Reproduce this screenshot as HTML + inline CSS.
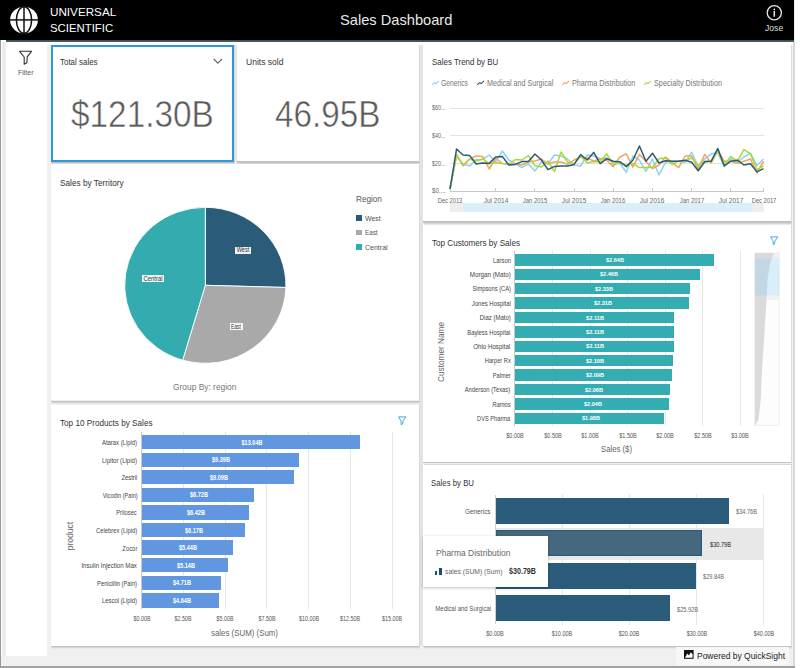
<!DOCTYPE html>
<html><head><meta charset="utf-8"><title>Sales Dashboard</title>
<style>
html,body{margin:0;padding:0;width:800px;height:668px;overflow:hidden;background:#fff;}
body{position:relative;font-family:"Liberation Sans",sans-serif;}
.a{position:absolute;box-sizing:content-box;}
.t{position:absolute;white-space:nowrap;}
</style></head><body>
<div class="a" style="left:0px;top:0px;width:795.00px;height:668.00px;background:#f0f0f0;"></div>
<div class="a" style="left:0px;top:0px;width:1.00px;height:668.00px;background:#9a9a9a;"></div>
<div class="a" style="left:792.5px;top:42px;width:2.50px;height:626.00px;background:#d9d9d9;"></div>
<div class="a" style="left:1px;top:655.5px;width:792.00px;height:10.50px;background:#f0f0f0;"></div>
<div class="a" style="left:0px;top:666.4px;width:795.00px;height:1.60px;background:#a2a2a2;"></div>
<div class="a" style="left:1px;top:42px;width:792.00px;height:2.50px;background:#ffffff;"></div>
<div class="a" style="left:1px;top:40px;width:5.00px;height:615.50px;background:#ffffff;"></div>
<div class="a" style="left:2px;top:42px;width:4.30px;height:613.50px;background:#ededed;"></div>
<div class="a" style="left:6.3px;top:42px;width:40.90px;height:613.50px;background:#ffffff;"></div>
<div class="a" style="left:0px;top:0px;width:794.00px;height:40.00px;background:#000000;"></div>
<div class="a" style="left:6px;top:40px;width:788.00px;height:1.00px;background:#4d4a4a;"></div>
<div class="a" style="left:6px;top:41px;width:788.00px;height:1.00px;background:#3a6170;"></div>
<div class="a" style="left:419px;top:44.5px;width:3.60px;height:601.50px;background:#e3e3e3;"></div>
<div class="a" style="left:234px;top:44.5px;width:2.50px;height:117.50px;background:#e3e3e3;"></div>
<div class="a" style="left:50.8px;top:162px;width:184.20px;height:1.40px;background:#c2c2c2;"></div>
<div class="a" style="left:51.8px;top:163.4px;width:183.20px;height:1.00px;background:#d6d6d6;"></div>
<div class="a" style="left:51.8px;top:164.4px;width:183.20px;height:1.00px;background:#e8e8e8;"></div>
<div class="a" style="left:234px;top:45.1px;width:1.20px;height:117.90px;background:#dadada;"></div>
<div class="a" style="left:50.8px;top:45.1px;width:183.20px;height:116.90px;background:#ffffff;"></div>
<div class="a" style="left:50.8px;top:45.1px;width:179.20px;height:112.90px;border:2px solid #2d9ad8;"></div>
<div class="a" style="left:236.5px;top:161.2px;width:183.60px;height:1.40px;background:#c2c2c2;"></div>
<div class="a" style="left:237.5px;top:162.6px;width:182.60px;height:1.00px;background:#d6d6d6;"></div>
<div class="a" style="left:237.5px;top:163.6px;width:182.60px;height:1.00px;background:#e8e8e8;"></div>
<div class="a" style="left:419.1px;top:44.5px;width:1.20px;height:117.70px;background:#dadada;"></div>
<div class="a" style="left:236.5px;top:44.5px;width:182.60px;height:116.70px;background:#ffffff;"></div>
<div class="a" style="left:50.8px;top:400.5px;width:369.30px;height:1.40px;background:#c2c2c2;"></div>
<div class="a" style="left:51.8px;top:401.9px;width:368.30px;height:1.00px;background:#d6d6d6;"></div>
<div class="a" style="left:51.8px;top:402.9px;width:368.30px;height:1.00px;background:#e8e8e8;"></div>
<div class="a" style="left:419.1px;top:163.8px;width:1.20px;height:237.70px;background:#dadada;"></div>
<div class="a" style="left:50.8px;top:163.8px;width:368.30px;height:236.70px;background:#ffffff;"></div>
<div class="a" style="left:50.8px;top:646px;width:369.30px;height:1.40px;background:#c2c2c2;"></div>
<div class="a" style="left:51.8px;top:647.4px;width:368.30px;height:1.00px;background:#d6d6d6;"></div>
<div class="a" style="left:51.8px;top:648.4px;width:368.30px;height:1.00px;background:#e8e8e8;"></div>
<div class="a" style="left:419.1px;top:404.5px;width:1.20px;height:242.50px;background:#dadada;"></div>
<div class="a" style="left:50.8px;top:404.5px;width:368.30px;height:241.50px;background:#ffffff;"></div>
<div class="a" style="left:422.6px;top:221.3px;width:369.40px;height:1.40px;background:#c2c2c2;"></div>
<div class="a" style="left:423.6px;top:222.70000000000002px;width:368.40px;height:1.00px;background:#d6d6d6;"></div>
<div class="a" style="left:423.6px;top:223.70000000000002px;width:368.40px;height:1.00px;background:#e8e8e8;"></div>
<div class="a" style="left:791px;top:44.5px;width:1.20px;height:177.80px;background:#dadada;"></div>
<div class="a" style="left:422.6px;top:44.5px;width:368.40px;height:176.80px;background:#ffffff;"></div>
<div class="a" style="left:422.6px;top:462.1px;width:369.40px;height:1.40px;background:#c2c2c2;"></div>
<div class="a" style="left:423.6px;top:463.5px;width:368.40px;height:1.00px;background:#d6d6d6;"></div>
<div class="a" style="left:423.6px;top:464.5px;width:368.40px;height:1.00px;background:#e8e8e8;"></div>
<div class="a" style="left:791px;top:224.5px;width:1.20px;height:238.60px;background:#dadada;"></div>
<div class="a" style="left:422.6px;top:224.5px;width:368.40px;height:237.60px;background:#ffffff;"></div>
<div class="a" style="left:422.6px;top:646px;width:369.40px;height:1.40px;background:#c2c2c2;"></div>
<div class="a" style="left:423.6px;top:647.4px;width:368.40px;height:1.00px;background:#d6d6d6;"></div>
<div class="a" style="left:423.6px;top:648.4px;width:368.40px;height:1.00px;background:#e8e8e8;"></div>
<div class="a" style="left:791px;top:465px;width:1.20px;height:182.00px;background:#dadada;"></div>
<div class="a" style="left:422.6px;top:465px;width:368.40px;height:181.00px;background:#ffffff;"></div>
<svg class="a" style="left:9px;top:6px" width="31" height="29" viewBox="0 0 31 29">
<ellipse cx="15" cy="14" rx="13.9" ry="13.3" fill="#fff"/>
<line x1="15" y1="0.5" x2="15" y2="27.5" stroke="#111" stroke-width="1.5"/>
<line x1="1" y1="13.9" x2="29" y2="13.9" stroke="#111" stroke-width="1.5"/>
<ellipse cx="15" cy="14" rx="7.6" ry="13.3" fill="none" stroke="#111" stroke-width="1.5"/>
</svg>
<svg class="a" style="left:765px;top:4px" width="19" height="18" viewBox="0 0 19 18">
<circle cx="9.3" cy="8.7" r="7.1" fill="none" stroke="#e6e6e6" stroke-width="1.3"/>
<circle cx="9.3" cy="5.3" r="0.85" fill="#e6e6e6"/>
<rect x="8.55" y="6.9" width="1.5" height="5.8" fill="#e6e6e6"/>
</svg>
<svg class="a" style="left:18px;top:50px" width="16" height="16" viewBox="0 0 16 16">
<path d="M1.5 1.3 H13.5 L9.2 6.8 L8.9 12.8 L6.2 14.2 L6.2 7 Z" fill="none" stroke="#333" stroke-width="1.1" stroke-linejoin="round"/>
</svg>
<svg class="a" style="left:213px;top:57.7px" width="10" height="7" viewBox="0 0 10 7">
<path d="M0.8 1 L4.9 5.2 L9 1" fill="none" stroke="#666" stroke-width="1.1"/>
</svg>
<svg class="a" style="left:431.6px;top:80px" width="8" height="6" viewBox="0 0 8 6"><path d="M0.2 4.9 L2.6 2.7 L4.2 3.6 L7 0.9" fill="none" stroke="#8fd2ef" stroke-width="1.1"/></svg>
<svg class="a" style="left:477.1px;top:80px" width="8" height="6" viewBox="0 0 8 6"><path d="M0.2 4.9 L2.6 2.7 L4.2 3.6 L7 0.9" fill="none" stroke="#2b5a78" stroke-width="1.1"/></svg>
<svg class="a" style="left:562.1px;top:80px" width="8" height="6" viewBox="0 0 8 6"><path d="M0.2 4.9 L2.6 2.7 L4.2 3.6 L7 0.9" fill="none" stroke="#f4a35e" stroke-width="1.1"/></svg>
<svg class="a" style="left:644.1px;top:80px" width="8" height="6" viewBox="0 0 8 6"><path d="M0.2 4.9 L2.6 2.7 L4.2 3.6 L7 0.9" fill="none" stroke="#a9d83a" stroke-width="1.1"/></svg>
<div class="a" style="left:450px;top:107.5px;width:314.00px;height:1.00px;background:#e2e2e2;"></div>
<div class="a" style="left:450px;top:135.1px;width:314.00px;height:1.00px;background:#e2e2e2;"></div>
<div class="a" style="left:450px;top:162.7px;width:314.00px;height:1.00px;background:#e2e2e2;"></div>
<div class="a" style="left:450px;top:190.5px;width:314.00px;height:1.00px;background:#c8c8c8;"></div>
<div class="a" style="left:449.5px;top:187.5px;width:1.00px;height:3.50px;background:#c8c8c8;"></div>
<div class="a" style="left:495.21875px;top:187.5px;width:1.00px;height:3.50px;background:#c8c8c8;"></div>
<div class="a" style="left:534.40625px;top:187.5px;width:1.00px;height:3.50px;background:#c8c8c8;"></div>
<div class="a" style="left:573.59375px;top:187.5px;width:1.00px;height:3.50px;background:#c8c8c8;"></div>
<div class="a" style="left:612.78125px;top:187.5px;width:1.00px;height:3.50px;background:#c8c8c8;"></div>
<div class="a" style="left:651.96875px;top:187.5px;width:1.00px;height:3.50px;background:#c8c8c8;"></div>
<div class="a" style="left:691.15625px;top:187.5px;width:1.00px;height:3.50px;background:#c8c8c8;"></div>
<div class="a" style="left:730.34375px;top:187.5px;width:1.00px;height:3.50px;background:#c8c8c8;"></div>
<div class="a" style="left:763.0px;top:187.5px;width:1.00px;height:3.50px;background:#c8c8c8;"></div>
<div class="a" style="left:450px;top:203.2px;width:302.00px;height:8.60px;background:#dbeffb;"></div>
<div class="a" style="left:752px;top:203.2px;width:12.00px;height:8.60px;background:#eeeeee;"></div>
<div class="a" style="left:450px;top:203.2px;width:12.50px;height:8.60px;background:#eeeeee;"></div>
<svg class="a" style="left:0;top:0" width="800" height="668"><polyline points="450.00,189.00 456.53,156.00 463.06,164.00 469.59,166.00 476.12,159.60 482.66,159.40 489.19,155.00 495.72,161.60 502.25,151.00 508.78,160.00 515.31,163.60 521.84,167.60 528.38,164.00 534.91,171.00 541.44,162.00 547.97,164.00 554.50,155.00 561.03,156.00 567.56,159.00 574.09,165.00 580.62,166.00 587.16,155.00 593.69,156.00 600.22,158.40 606.75,158.00 613.28,162.30 619.81,163.40 626.34,172.30 632.88,156.00 639.41,160.20 645.94,171.40 652.47,159.00 659.00,175.00 665.53,162.30 672.06,161.20 678.59,161.20 685.12,162.30 691.66,152.30 698.19,166.60 704.72,159.00 711.25,153.80 717.78,152.70 724.31,166.60 730.84,159.00 737.38,162.30 743.91,157.00 750.44,153.20 756.97,165.50 763.50,159.00" fill="none" stroke="#8fd2ef" stroke-width="1.5" stroke-linejoin="round"/><polyline points="450.00,189.00 456.53,154.00 463.06,166.00 469.59,159.00 476.12,156.00 482.66,156.40 489.19,169.00 495.72,158.00 502.25,163.60 508.78,164.00 515.31,164.00 521.84,165.00 528.38,162.00 534.91,161.00 541.44,159.00 547.97,164.00 554.50,162.00 561.03,162.00 567.56,164.40 574.09,160.00 580.62,157.00 587.16,158.00 593.69,161.00 600.22,159.00 606.75,160.20 613.28,166.60 619.81,157.00 626.34,153.80 632.88,167.20 639.41,154.40 645.94,161.20 652.47,168.70 659.00,165.00 665.53,157.00 672.06,162.30 678.59,167.60 685.12,156.00 691.66,156.00 698.19,169.30 704.72,154.40 711.25,163.00 717.78,150.60 724.31,161.20 730.84,161.20 737.38,163.40 743.91,161.20 750.44,159.00 756.97,173.00 763.50,161.20" fill="none" stroke="#f4a35e" stroke-width="1.5" stroke-linejoin="round"/><polyline points="450.00,189.00 456.53,155.00 463.06,165.00 469.59,159.00 476.12,161.00 482.66,159.00 489.19,163.60 495.72,162.40 502.25,163.60 508.78,164.00 515.31,159.60 521.84,160.00 528.38,155.60 534.91,165.60 541.44,167.00 547.97,161.00 554.50,171.60 561.03,152.00 567.56,162.00 574.09,164.00 580.62,156.00 587.16,163.00 593.69,161.60 600.22,162.00 606.75,153.80 613.28,164.40 619.81,163.00 626.34,165.00 632.88,163.40 639.41,167.60 645.94,167.60 652.47,167.20 659.00,158.70 665.53,158.00 672.06,164.40 678.59,160.80 685.12,160.80 691.66,158.00 698.19,165.50 704.72,161.20 711.25,160.80 717.78,150.60 724.31,164.40 730.84,156.60 737.38,161.20 743.91,149.60 750.44,153.80 756.97,169.70 763.50,166.00" fill="none" stroke="#a9d83a" stroke-width="1.5" stroke-linejoin="round"/><polyline points="450.00,189.00 456.53,149.00 463.06,155.00 469.59,155.40 476.12,164.00 482.66,163.00 489.19,163.40 495.72,157.00 502.25,156.40 508.78,165.00 515.31,164.40 521.84,161.60 528.38,161.40 534.91,154.00 541.44,160.00 547.97,169.60 554.50,166.40 561.03,166.00 567.56,166.00 574.09,164.40 580.62,154.60 587.16,160.00 593.69,152.40 600.22,163.60 606.75,158.70 613.28,161.20 619.81,161.70 626.34,166.60 632.88,160.20 639.41,146.00 645.94,161.20 652.47,153.20 659.00,163.00 665.53,160.80 672.06,161.20 678.59,161.20 685.12,160.20 691.66,162.30 698.19,170.80 704.72,161.70 711.25,161.20 717.78,148.50 724.31,166.00 730.84,161.20 737.38,160.20 743.91,165.00 750.44,163.80 756.97,171.90 763.50,168.70" fill="none" stroke="#2b5a78" stroke-width="1.5" stroke-linejoin="round"/></svg>
<svg class="a" style="left:0;top:0" width="800" height="668"><g transform="translate(0,285.3) scale(1,0.96774) translate(0,-285.3)"><path d="M205.3,285.3 L205.30,204.70 A80.6,80.6 0 0 1 285.87,287.55 Z" fill="#2a5b78" stroke="#fff" stroke-width="0.9" vector-effect="non-scaling-stroke"/><path d="M205.3,285.3 L285.87,287.55 A80.6,80.6 0 0 1 182.68,362.66 Z" fill="#a9a9a9" stroke="#fff" stroke-width="0.9" vector-effect="non-scaling-stroke"/><path d="M205.3,285.3 L182.68,362.66 A80.6,80.6 0 0 1 205.30,204.70 Z" fill="#34abae" stroke="#fff" stroke-width="0.9" vector-effect="non-scaling-stroke"/></g></svg>
<div class="a" style="left:235px;top:246.5px;width:15.70px;height:7.50px;background:rgba(255,255,255,0.92);"></div>
<div class="a" style="left:229.8px;top:322.8px;width:12.80px;height:7.50px;background:rgba(255,255,255,0.92);"></div>
<div class="a" style="left:142px;top:275px;width:21.90px;height:7.40px;background:rgba(255,255,255,0.92);"></div>
<div class="a" style="left:355.9px;top:215.0px;width:6.00px;height:5.80px;background:#2a5b78;"></div>
<div class="a" style="left:355.9px;top:229.5px;width:6.00px;height:5.80px;background:#a9a9a9;"></div>
<div class="a" style="left:355.9px;top:244.0px;width:6.00px;height:5.80px;background:#34abae;"></div>
<svg class="a" style="left:398px;top:416.3px" width="9" height="10" viewBox="0 0 9 10">
<path d="M0.5 0.9 H7.8 L5.0 4.8 L4.7 7.8 L3.2 8.8 L3.0 4.8 Z" fill="none" stroke="#3ea3dc" stroke-width="0.95" stroke-linejoin="round"/>
</svg>
<div class="a" style="left:182.85px;top:432px;width:1.00px;height:177.00px;background:#e6e6e6;"></div>
<div class="a" style="left:224.6px;top:432px;width:1.00px;height:177.00px;background:#e6e6e6;"></div>
<div class="a" style="left:266.35px;top:432px;width:1.00px;height:177.00px;background:#e6e6e6;"></div>
<div class="a" style="left:308.1px;top:432px;width:1.00px;height:177.00px;background:#e6e6e6;"></div>
<div class="a" style="left:349.85px;top:432px;width:1.00px;height:177.00px;background:#e6e6e6;"></div>
<div class="a" style="left:391.6px;top:432px;width:1.00px;height:177.00px;background:#e6e6e6;"></div>
<div class="a" style="left:141.0px;top:432px;width:1.00px;height:177.00px;background:#c9c9c9;"></div>
<div class="a" style="left:142.0px;top:435.0px;width:217.77px;height:14.30px;background:#6197e0;"></div>
<div class="a" style="left:142.0px;top:452.58px;width:156.81px;height:14.30px;background:#6197e0;"></div>
<div class="a" style="left:142.0px;top:470.15999999999997px;width:151.80px;height:14.30px;background:#6197e0;"></div>
<div class="a" style="left:142.0px;top:487.74px;width:112.22px;height:14.30px;background:#6197e0;"></div>
<div class="a" style="left:142.0px;top:505.32px;width:107.21px;height:14.30px;background:#6197e0;"></div>
<div class="a" style="left:142.0px;top:522.9px;width:103.04px;height:14.30px;background:#6197e0;"></div>
<div class="a" style="left:142.0px;top:540.48px;width:90.85px;height:14.30px;background:#6197e0;"></div>
<div class="a" style="left:142.0px;top:558.06px;width:85.84px;height:14.30px;background:#6197e0;"></div>
<div class="a" style="left:142.0px;top:575.64px;width:78.66px;height:14.30px;background:#6197e0;"></div>
<div class="a" style="left:142.0px;top:593.22px;width:77.49px;height:14.30px;background:#6197e0;"></div>
<svg class="a" style="left:769.8px;top:235.8px" width="9" height="10" viewBox="0 0 9 10">
<path d="M0.5 0.9 H7.8 L5.0 4.8 L4.7 7.8 L3.2 8.8 L3.0 4.8 Z" fill="none" stroke="#3ea3dc" stroke-width="0.95" stroke-linejoin="round"/>
</svg>
<div class="a" style="left:552.08px;top:251px;width:1.00px;height:175.00px;background:#e6e6e6;"></div>
<div class="a" style="left:589.66px;top:251px;width:1.00px;height:175.00px;background:#e6e6e6;"></div>
<div class="a" style="left:627.24px;top:251px;width:1.00px;height:175.00px;background:#e6e6e6;"></div>
<div class="a" style="left:664.8199999999999px;top:251px;width:1.00px;height:175.00px;background:#e6e6e6;"></div>
<div class="a" style="left:702.4px;top:251px;width:1.00px;height:175.00px;background:#e6e6e6;"></div>
<div class="a" style="left:739.98px;top:251px;width:1.00px;height:175.00px;background:#e6e6e6;"></div>
<div class="a" style="left:514.4px;top:251px;width:1.00px;height:175.00px;background:#c9c9c9;"></div>
<div class="a" style="left:515.4px;top:254.3px;width:198.40px;height:11.40px;background:#34adb2;"></div>
<div class="a" style="left:515.4px;top:268.69px;width:184.87px;height:11.40px;background:#34adb2;"></div>
<div class="a" style="left:515.4px;top:283.08000000000004px;width:175.10px;height:11.40px;background:#34adb2;"></div>
<div class="a" style="left:515.4px;top:297.47px;width:173.60px;height:11.40px;background:#34adb2;"></div>
<div class="a" style="left:515.4px;top:311.86px;width:158.57px;height:11.40px;background:#34adb2;"></div>
<div class="a" style="left:515.4px;top:326.25px;width:158.57px;height:11.40px;background:#34adb2;"></div>
<div class="a" style="left:515.4px;top:340.64px;width:158.57px;height:11.40px;background:#34adb2;"></div>
<div class="a" style="left:515.4px;top:355.03000000000003px;width:157.82px;height:11.40px;background:#34adb2;"></div>
<div class="a" style="left:515.4px;top:369.42px;width:157.06px;height:11.40px;background:#34adb2;"></div>
<div class="a" style="left:515.4px;top:383.81px;width:154.81px;height:11.40px;background:#34adb2;"></div>
<div class="a" style="left:515.4px;top:398.20000000000005px;width:153.31px;height:11.40px;background:#34adb2;"></div>
<div class="a" style="left:515.4px;top:412.59000000000003px;width:148.80px;height:11.40px;background:#34adb2;"></div>
<svg class="a" style="left:754px;top:252px" width="27" height="175" viewBox="0 0 27 175">
<rect x="0.9" y="0.9" width="24.3" height="172.4" fill="#fdfdfd" stroke="#ececec" stroke-width="0.8"/>
<rect x="0.9" y="0.9" width="24.3" height="5.6" fill="#efefef"/>
<rect x="0.9" y="43.3" width="24.3" height="4.5" fill="#f1f1f1"/>
<path d="M19.80,0.90 L18.00,6.00 L15.70,13.00 L13.50,28.00 L12.20,53.00 L10.00,88.00 L8.00,118.00 L6.70,148.00 L4.50,168.00 L1.30,173.30 L0.90,173.30 L0.90,0.90 Z" fill="#dadada"/>
<rect x="0.9" y="6.5" width="24.3" height="36.8" fill="rgba(153,211,243,0.36)"/>
</svg>
<div class="a" style="left:495px;top:527.5px;width:269.00px;height:32.00px;background:#e8e8e8;"></div>
<div class="a" style="left:561.7px;top:494px;width:1.00px;height:130.50px;background:#e6e6e6;"></div>
<div class="a" style="left:628.9px;top:494px;width:1.00px;height:130.50px;background:#e6e6e6;"></div>
<div class="a" style="left:696.1px;top:494px;width:1.00px;height:130.50px;background:#e6e6e6;"></div>
<div class="a" style="left:763.3px;top:494px;width:1.00px;height:130.50px;background:#e6e6e6;"></div>
<div class="a" style="left:494.5px;top:495.3px;width:1.00px;height:129.20px;background:#cfcfcf;"></div>
<div class="a" style="left:495.5px;top:497.5px;width:233.59px;height:26.25px;background:#2a5c7a;"></div>
<div class="a" style="left:495.5px;top:530px;width:206.91px;height:26.25px;background:#45687f;box-shadow:inset 0 0 0 1.2px #2a5c7a;"></div>
<div class="a" style="left:495.5px;top:562.5px;width:200.52px;height:26.25px;background:#2a5c7a;"></div>
<div class="a" style="left:495.5px;top:595px;width:174.18px;height:26.25px;background:#2a5c7a;"></div>
<div class="a" style="left:422.5px;top:535.5px;width:125.50px;height:51.50px;background:#ffffff;box-shadow:0 1px 3px rgba(0,0,0,0.25);"></div>
<div class="a" style="left:434.8px;top:570.8px;width:2.40px;height:3.80px;background:#1d4d6c;"></div>
<div class="a" style="left:439.2px;top:567.5px;width:2.80px;height:7.10px;background:#1d4d6c;"></div>
<div class="a" style="left:676.3px;top:646.6px;width:112.70px;height:18.40px;background:#f7f7f7;"></div>
<svg class="a" style="left:683.5px;top:649.8px" width="10" height="9" viewBox="0 0 10 9">
<rect x="0" y="0" width="9.6" height="8.8" fill="#111"/>
<path d="M1 7.8 L3.3 3.6 L5 5.6 L6.8 2.2 L8.6 4.2 L8.6 7.8 Z" fill="#fff"/>
</svg>
<div class="t" id="logo1" style="font-size:11.63px;line-height:11.63px;color:#fff;left:49.50px;top:6.20px;transform-origin:0 0;transform:scaleX(1.0045);">UNIVERSAL</div>
<div class="t" id="logo2" style="font-size:11.63px;line-height:11.63px;color:#fff;left:49.50px;top:22.20px;transform-origin:0 0;transform:scaleX(0.9784);">SCIENTIFIC</div>
<div class="t" id="title" style="font-size:14.97px;line-height:14.97px;color:#e8e8e8;left:340.00px;top:13.35px;transform-origin:0 0;transform:scaleX(0.9787);">Sales Dashboard</div>
<div class="t" id="jose" style="font-size:9.16px;line-height:9.16px;color:#dcdcdc;left:764.90px;top:23.75px;transform-origin:0 0;transform:scaleX(0.9409);">Jose</div>
<div class="t" id="filter" style="font-size:7.27px;line-height:7.27px;color:#5a5a6a;left:18.20px;top:68.60px;transform-origin:0 0;transform:scaleX(0.9594);">Filter</div>
<div class="t" id="ts" style="font-size:9.59px;line-height:9.59px;color:#333;left:60.30px;top:56.90px;transform-origin:0 0;transform:scaleX(0.8307);">Total sales</div>
<div class="t" id="tsv" style="font-size:36.34px;line-height:36.34px;color:#5a5a5a;-webkit-text-stroke:0.5px #fff;left:71.00px;top:97.00px;transform-origin:0 0;transform:scaleX(0.9180);">$121.30B</div>
<div class="t" id="us" style="font-size:9.59px;line-height:9.59px;color:#333;left:245.80px;top:56.90px;transform-origin:0 0;transform:scaleX(0.8915);">Units sold</div>
<div class="t" id="usv" style="font-size:36.34px;line-height:36.34px;color:#5a5a5a;-webkit-text-stroke:0.5px #fff;left:274.50px;top:97.00px;transform-origin:0 0;transform:scaleX(0.9163);">46.95B</div>
<div class="t" id="trt" style="font-size:9.59px;line-height:9.59px;color:#333;left:432.00px;top:57.20px;transform-origin:0 0;transform:scaleX(0.8302);">Sales Trend by BU</div>
<div class="t" id="lg1" style="font-size:8.14px;line-height:8.14px;color:#777;left:441.00px;top:80.40px;transform-origin:0 0;transform:scaleX(0.8304);">Generics</div>
<div class="t" id="lg2" style="font-size:8.14px;line-height:8.14px;color:#777;left:486.70px;top:80.40px;transform-origin:0 0;transform:scaleX(0.8789);">Medical and Surgical</div>
<div class="t" id="lg3" style="font-size:8.14px;line-height:8.14px;color:#777;left:571.70px;top:80.40px;transform-origin:0 0;transform:scaleX(0.8871);">Pharma Distribution</div>
<div class="t" id="lg4" style="font-size:8.14px;line-height:8.14px;color:#777;left:653.70px;top:80.40px;transform-origin:0 0;transform:scaleX(0.8962);">Specialty Distribution</div>
<div class="t" id="ty60" style="font-size:7.27px;line-height:7.27px;color:#666;left:432.00px;top:104.40px;transform-origin:0 0;transform:scaleX(0.7423);">$60...</div>
<div class="t" id="ty40" style="font-size:7.27px;line-height:7.27px;color:#666;left:432.00px;top:132.00px;transform-origin:0 0;transform:scaleX(0.7423);">$40...</div>
<div class="t" id="ty20" style="font-size:7.27px;line-height:7.27px;color:#666;left:432.00px;top:159.60px;transform-origin:0 0;transform:scaleX(0.7423);">$20...</div>
<div class="t" id="ty00" style="font-size:7.27px;line-height:7.27px;color:#666;left:432.00px;top:187.20px;transform-origin:0 0;transform:scaleX(0.8356);">$0....</div>
<div class="t" id="tx0" style="font-size:7.27px;line-height:7.27px;color:#666;left:450.00px;top:196.60px;transform-origin:50% 0;transform:translateX(-50%) scaleX(0.7875);">Dec 2013</div>
<div class="t" id="tx7" style="font-size:7.27px;line-height:7.27px;color:#666;left:495.72px;top:196.60px;transform-origin:50% 0;transform:translateX(-50%) scaleX(0.8914);">Jul 2014</div>
<div class="t" id="tx13" style="font-size:7.27px;line-height:7.27px;color:#666;left:534.91px;top:196.60px;transform-origin:50% 0;transform:translateX(-50%) scaleX(0.8192);">Jan 2015</div>
<div class="t" id="tx19" style="font-size:7.27px;line-height:7.27px;color:#666;left:574.09px;top:196.60px;transform-origin:50% 0;transform:translateX(-50%) scaleX(0.8914);">Jul 2015</div>
<div class="t" id="tx25" style="font-size:7.27px;line-height:7.27px;color:#666;left:613.28px;top:196.60px;transform-origin:50% 0;transform:translateX(-50%) scaleX(0.8192);">Jan 2016</div>
<div class="t" id="tx31" style="font-size:7.27px;line-height:7.27px;color:#666;left:652.47px;top:196.60px;transform-origin:50% 0;transform:translateX(-50%) scaleX(0.8914);">Jul 2016</div>
<div class="t" id="tx37" style="font-size:7.27px;line-height:7.27px;color:#666;left:691.66px;top:196.60px;transform-origin:50% 0;transform:translateX(-50%) scaleX(0.8192);">Jan 2017</div>
<div class="t" id="tx43" style="font-size:7.27px;line-height:7.27px;color:#666;left:730.84px;top:196.60px;transform-origin:50% 0;transform:translateX(-50%) scaleX(0.8914);">Jul 2017</div>
<div class="t" id="tx48" style="font-size:7.27px;line-height:7.27px;color:#666;left:763.50px;top:196.60px;transform-origin:50% 0;transform:translateX(-50%) scaleX(0.7875);">Dec 2017</div>
<div class="t" id="tert" style="font-size:9.59px;line-height:9.59px;color:#333;left:60.00px;top:177.50px;transform-origin:0 0;transform:scaleX(0.8628);">Sales by Territory</div>
<div class="t" id="pw" style="font-size:6.54px;line-height:6.54px;color:#333;left:242.85px;top:247.45px;transform-origin:50% 0;transform:translateX(-50%) scaleX(0.8601);">West</div>
<div class="t" id="pe" style="font-size:6.54px;line-height:6.54px;color:#333;left:236.20px;top:323.75px;transform-origin:50% 0;transform:translateX(-50%) scaleX(0.7493);">East</div>
<div class="t" id="pc" style="font-size:6.54px;line-height:6.54px;color:#333;left:152.95px;top:275.95px;transform-origin:50% 0;transform:translateX(-50%) scaleX(0.8973);">Central</div>
<div class="t" id="grp" style="font-size:8.14px;line-height:8.14px;color:#777;left:172.90px;top:384.00px;transform-origin:0 0;transform:scaleX(1.0322);">Group By: region</div>
<div class="t" id="reg" style="font-size:8.28px;line-height:8.28px;color:#555;left:356.00px;top:195.55px;transform-origin:0 0;transform:scaleX(0.9884);">Region</div>
<div class="t" id="rl0" style="font-size:7.41px;line-height:7.41px;color:#555;left:364.80px;top:214.65px;transform-origin:0 0;transform:scaleX(0.9433);">West</div>
<div class="t" id="rl1" style="font-size:7.41px;line-height:7.41px;color:#555;left:364.80px;top:229.15px;transform-origin:0 0;transform:scaleX(0.8430);">East</div>
<div class="t" id="rl2" style="font-size:7.41px;line-height:7.41px;color:#555;left:364.80px;top:243.65px;transform-origin:0 0;transform:scaleX(0.9460);">Central</div>
<div class="t" id="prt" style="font-size:9.59px;line-height:9.59px;color:#333;left:60.00px;top:417.50px;transform-origin:0 0;transform:scaleX(0.8516);">Top 10 Products by Sales</div>
<div class="t" id="pl0" style="font-size:6.40px;line-height:6.40px;color:#444;right:662.80px;top:440.10px;transform-origin:100% 0;transform:scaleX(0.9207);">Atarax (Lipid)</div>
<div class="t" id="pv0" style="font-size:6.40px;line-height:6.40px;color:#fff;font-weight:bold;left:251.68px;top:439.70px;transform-origin:50% 0;transform:translateX(-50%) scaleX(0.8688);">$13.04B</div>
<div class="t" id="pl1" style="font-size:6.40px;line-height:6.40px;color:#444;right:662.80px;top:457.68px;transform-origin:100% 0;transform:scaleX(0.9471);">Lipitor (Lipid)</div>
<div class="t" id="pv1" style="font-size:6.40px;line-height:6.40px;color:#fff;font-weight:bold;left:221.21px;top:457.28px;transform-origin:50% 0;transform:translateX(-50%) scaleX(0.8734);">$9.39B</div>
<div class="t" id="pl2" style="font-size:6.40px;line-height:6.40px;color:#444;right:662.80px;top:475.26px;transform-origin:100% 0;transform:scaleX(0.9192);">Zestril</div>
<div class="t" id="pv2" style="font-size:6.40px;line-height:6.40px;color:#fff;font-weight:bold;left:218.70px;top:474.86px;transform-origin:50% 0;transform:translateX(-50%) scaleX(0.8734);">$9.09B</div>
<div class="t" id="pl3" style="font-size:6.40px;line-height:6.40px;color:#444;right:662.80px;top:492.84px;transform-origin:100% 0;transform:scaleX(0.8822);">Vicodin (Pain)</div>
<div class="t" id="pv3" style="font-size:6.40px;line-height:6.40px;color:#fff;font-weight:bold;left:198.91px;top:492.44px;transform-origin:50% 0;transform:translateX(-50%) scaleX(0.8734);">$6.72B</div>
<div class="t" id="pl4" style="font-size:6.40px;line-height:6.40px;color:#444;right:662.80px;top:510.42px;transform-origin:100% 0;transform:scaleX(0.9017);">Prilosec</div>
<div class="t" id="pv4" style="font-size:6.40px;line-height:6.40px;color:#fff;font-weight:bold;left:196.41px;top:510.02px;transform-origin:50% 0;transform:translateX(-50%) scaleX(0.8734);">$6.42B</div>
<div class="t" id="pl5" style="font-size:6.40px;line-height:6.40px;color:#444;right:662.80px;top:528.00px;transform-origin:100% 0;transform:scaleX(0.9089);">Celebrex (Lipid)</div>
<div class="t" id="pv5" style="font-size:6.40px;line-height:6.40px;color:#fff;font-weight:bold;left:194.32px;top:527.60px;transform-origin:50% 0;transform:translateX(-50%) scaleX(0.8734);">$6.17B</div>
<div class="t" id="pl6" style="font-size:6.40px;line-height:6.40px;color:#444;right:662.80px;top:545.58px;transform-origin:100% 0;transform:scaleX(0.9178);">Zocor</div>
<div class="t" id="pv6" style="font-size:6.40px;line-height:6.40px;color:#fff;font-weight:bold;left:188.22px;top:545.18px;transform-origin:50% 0;transform:translateX(-50%) scaleX(0.8734);">$5.44B</div>
<div class="t" id="pl7" style="font-size:6.40px;line-height:6.40px;color:#444;right:662.80px;top:563.16px;transform-origin:100% 0;transform:scaleX(0.9584);">Insulin Injection Max</div>
<div class="t" id="pv7" style="font-size:6.40px;line-height:6.40px;color:#fff;font-weight:bold;left:185.72px;top:562.76px;transform-origin:50% 0;transform:translateX(-50%) scaleX(0.8734);">$5.14B</div>
<div class="t" id="pl8" style="font-size:6.40px;line-height:6.40px;color:#444;right:662.80px;top:580.74px;transform-origin:100% 0;transform:scaleX(0.9081);">Penicillin (Pain)</div>
<div class="t" id="pv8" style="font-size:6.40px;line-height:6.40px;color:#fff;font-weight:bold;left:182.13px;top:580.34px;transform-origin:50% 0;transform:translateX(-50%) scaleX(0.8734);">$4.71B</div>
<div class="t" id="pl9" style="font-size:6.40px;line-height:6.40px;color:#444;right:662.80px;top:598.32px;transform-origin:100% 0;transform:scaleX(0.9207);">Lescol (Lipid)</div>
<div class="t" id="pv9" style="font-size:6.40px;line-height:6.40px;color:#fff;font-weight:bold;left:181.54px;top:597.92px;transform-origin:50% 0;transform:translateX(-50%) scaleX(0.8734);">$4.64B</div>
<div class="t" id="pa0" style="font-size:6.69px;line-height:6.69px;color:#555;left:141.60px;top:616.00px;transform-origin:50% 0;transform:translateX(-50%) scaleX(0.8018);">$0.00B</div>
<div class="t" id="pa1" style="font-size:6.69px;line-height:6.69px;color:#555;left:183.35px;top:616.00px;transform-origin:50% 0;transform:translateX(-50%) scaleX(0.8018);">$2.50B</div>
<div class="t" id="pa2" style="font-size:6.69px;line-height:6.69px;color:#555;left:225.10px;top:616.00px;transform-origin:50% 0;transform:translateX(-50%) scaleX(0.8018);">$5.00B</div>
<div class="t" id="pa3" style="font-size:6.69px;line-height:6.69px;color:#555;left:266.85px;top:616.00px;transform-origin:50% 0;transform:translateX(-50%) scaleX(0.8018);">$7.50B</div>
<div class="t" id="pa4" style="font-size:6.69px;line-height:6.69px;color:#555;left:308.60px;top:616.00px;transform-origin:50% 0;transform:translateX(-50%) scaleX(0.8025);">$10.00B</div>
<div class="t" id="pa5" style="font-size:6.69px;line-height:6.69px;color:#555;left:350.35px;top:616.00px;transform-origin:50% 0;transform:translateX(-50%) scaleX(0.8025);">$12.50B</div>
<div class="t" id="pa6" style="font-size:6.69px;line-height:6.69px;color:#555;left:392.10px;top:616.00px;transform-origin:50% 0;transform:translateX(-50%) scaleX(0.8025);">$15.00B</div>
<div class="t" id="pyl" style="font-size:9.30px;line-height:9.30px;color:#666;left:71.00px;top:535.50px;transform:translate(-50%,-50%) rotate(-90deg) scaleX(0.9189);transform-origin:50% 50%;">product</div>
<div class="t" id="pxl" style="font-size:9.01px;line-height:9.01px;color:#666;left:211.30px;top:628.50px;transform-origin:0 0;transform:scaleX(0.8756);">sales (SUM) (Sum)</div>
<div class="t" id="cut" style="font-size:9.59px;line-height:9.59px;color:#333;left:432.00px;top:237.50px;transform-origin:0 0;transform:scaleX(0.8477);">Top Customers by Sales</div>
<div class="t" id="cl0" style="font-size:6.54px;line-height:6.54px;color:#444;right:289.50px;top:257.65px;transform-origin:100% 0;transform:scaleX(0.9007);">Larson</div>
<div class="t" id="cv0" style="font-size:6.25px;line-height:6.25px;color:#fff;font-weight:bold;left:615.40px;top:257.05px;transform-origin:50% 0;transform:translateX(-50%) scaleX(0.8930);">$2.64B</div>
<div class="t" id="cl1" style="font-size:6.54px;line-height:6.54px;color:#444;right:289.50px;top:272.04px;transform-origin:100% 0;transform:scaleX(0.9570);">Morgan (Mato)</div>
<div class="t" id="cv1" style="font-size:6.25px;line-height:6.25px;color:#fff;font-weight:bold;left:608.63px;top:271.44px;transform-origin:50% 0;transform:translateX(-50%) scaleX(0.8930);">$2.46B</div>
<div class="t" id="cl2" style="font-size:6.54px;line-height:6.54px;color:#444;right:289.50px;top:286.43px;transform-origin:100% 0;transform:scaleX(0.8766);">Simpsons (CA)</div>
<div class="t" id="cv2" style="font-size:6.25px;line-height:6.25px;color:#fff;font-weight:bold;left:603.75px;top:285.83px;transform-origin:50% 0;transform:translateX(-50%) scaleX(0.8930);">$2.33B</div>
<div class="t" id="cl3" style="font-size:6.54px;line-height:6.54px;color:#444;right:289.50px;top:300.82px;transform-origin:100% 0;transform:scaleX(0.9103);">Jones Hospital</div>
<div class="t" id="cv3" style="font-size:6.25px;line-height:6.25px;color:#fff;font-weight:bold;left:603.00px;top:300.22px;transform-origin:50% 0;transform:translateX(-50%) scaleX(0.8930);">$2.31B</div>
<div class="t" id="cl4" style="font-size:6.54px;line-height:6.54px;color:#444;right:289.50px;top:315.21px;transform-origin:100% 0;transform:scaleX(0.9181);">Diaz (Mato)</div>
<div class="t" id="cv4" style="font-size:6.25px;line-height:6.25px;color:#fff;font-weight:bold;left:595.48px;top:314.61px;transform-origin:50% 0;transform:translateX(-50%) scaleX(0.9085);">$2.11B</div>
<div class="t" id="cl5" style="font-size:6.54px;line-height:6.54px;color:#444;right:289.50px;top:329.60px;transform-origin:100% 0;transform:scaleX(0.8906);">Bayless Hospital</div>
<div class="t" id="cv5" style="font-size:6.25px;line-height:6.25px;color:#fff;font-weight:bold;left:595.48px;top:329.00px;transform-origin:50% 0;transform:translateX(-50%) scaleX(0.9085);">$2.11B</div>
<div class="t" id="cl6" style="font-size:6.54px;line-height:6.54px;color:#444;right:289.50px;top:343.99px;transform-origin:100% 0;transform:scaleX(0.9434);">Ohio Hospital</div>
<div class="t" id="cv6" style="font-size:6.25px;line-height:6.25px;color:#fff;font-weight:bold;left:595.48px;top:343.39px;transform-origin:50% 0;transform:translateX(-50%) scaleX(0.9085);">$2.11B</div>
<div class="t" id="cl7" style="font-size:6.54px;line-height:6.54px;color:#444;right:289.50px;top:358.38px;transform-origin:100% 0;transform:scaleX(0.8735);">Harper Rx</div>
<div class="t" id="cv7" style="font-size:6.25px;line-height:6.25px;color:#fff;font-weight:bold;left:595.11px;top:357.78px;transform-origin:50% 0;transform:translateX(-50%) scaleX(0.8930);">$2.10B</div>
<div class="t" id="cl8" style="font-size:6.54px;line-height:6.54px;color:#444;right:289.50px;top:372.77px;transform-origin:100% 0;transform:scaleX(0.8694);">Palmer</div>
<div class="t" id="cv8" style="font-size:6.25px;line-height:6.25px;color:#fff;font-weight:bold;left:594.73px;top:372.17px;transform-origin:50% 0;transform:translateX(-50%) scaleX(0.8930);">$2.09B</div>
<div class="t" id="cl9" style="font-size:6.54px;line-height:6.54px;color:#444;right:289.50px;top:387.16px;transform-origin:100% 0;transform:scaleX(0.8889);">Anderson (Texas)</div>
<div class="t" id="cv9" style="font-size:6.25px;line-height:6.25px;color:#fff;font-weight:bold;left:593.60px;top:386.56px;transform-origin:50% 0;transform:translateX(-50%) scaleX(0.8930);">$2.06B</div>
<div class="t" id="cl10" style="font-size:6.54px;line-height:6.54px;color:#444;font-style:italic;right:289.50px;top:401.55px;transform-origin:100% 0;transform:scaleX(0.8936);">Ramos</div>
<div class="t" id="cv10" style="font-size:6.25px;line-height:6.25px;color:#fff;font-weight:bold;left:592.85px;top:400.95px;transform-origin:50% 0;transform:translateX(-50%) scaleX(0.8930);">$2.04B</div>
<div class="t" id="cl11" style="font-size:6.54px;line-height:6.54px;color:#444;right:289.50px;top:415.94px;transform-origin:100% 0;transform:scaleX(0.8656);">DVS Pharma</div>
<div class="t" id="cv11" style="font-size:6.25px;line-height:6.25px;color:#fff;font-weight:bold;left:590.60px;top:415.34px;transform-origin:50% 0;transform:translateX(-50%) scaleX(0.8930);">$1.98B</div>
<div class="t" id="ca0" style="font-size:6.69px;line-height:6.69px;color:#555;left:515.00px;top:432.60px;transform-origin:50% 0;transform:translateX(-50%) scaleX(0.8254);">$0.00B</div>
<div class="t" id="ca1" style="font-size:6.69px;line-height:6.69px;color:#555;left:552.58px;top:432.60px;transform-origin:50% 0;transform:translateX(-50%) scaleX(0.8254);">$0.50B</div>
<div class="t" id="ca2" style="font-size:6.69px;line-height:6.69px;color:#555;left:590.16px;top:432.60px;transform-origin:50% 0;transform:translateX(-50%) scaleX(0.8254);">$1.00B</div>
<div class="t" id="ca3" style="font-size:6.69px;line-height:6.69px;color:#555;left:627.74px;top:432.60px;transform-origin:50% 0;transform:translateX(-50%) scaleX(0.8254);">$1.50B</div>
<div class="t" id="ca4" style="font-size:6.69px;line-height:6.69px;color:#555;left:665.32px;top:432.60px;transform-origin:50% 0;transform:translateX(-50%) scaleX(0.8254);">$2.00B</div>
<div class="t" id="ca5" style="font-size:6.69px;line-height:6.69px;color:#555;left:702.90px;top:432.60px;transform-origin:50% 0;transform:translateX(-50%) scaleX(0.8254);">$2.50B</div>
<div class="t" id="ca6" style="font-size:6.69px;line-height:6.69px;color:#555;left:740.48px;top:432.60px;transform-origin:50% 0;transform:translateX(-50%) scaleX(0.8254);">$3.00B</div>
<div class="t" id="cyl" style="font-size:9.30px;line-height:9.30px;color:#666;left:441.70px;top:352.00px;transform:translate(-50%,-50%) rotate(-90deg) scaleX(0.8864);transform-origin:50% 50%;">Customer Name</div>
<div class="t" id="cxl" style="font-size:9.01px;line-height:9.01px;color:#666;left:601.20px;top:444.70px;transform-origin:0 0;transform:scaleX(0.8607);">Sales ($)</div>
<div class="t" id="but" style="font-size:9.88px;line-height:9.88px;color:#333;left:431.20px;top:478.20px;transform-origin:0 0;transform:scaleX(0.7913);">Sales by BU</div>
<div class="t" id="bv0" style="font-size:6.69px;line-height:6.69px;color:#666;left:736.29px;top:509.00px;transform-origin:0 0;transform:scaleX(0.8426);">$34.76B</div>
<div class="t" id="bv1" style="font-size:6.69px;line-height:6.69px;color:#222;left:709.61px;top:541.50px;transform-origin:0 0;transform:scaleX(0.8426);">$30.79B</div>
<div class="t" id="bv2" style="font-size:6.69px;line-height:6.69px;color:#666;left:703.22px;top:574.00px;transform-origin:0 0;transform:scaleX(0.8426);">$29.84B</div>
<div class="t" id="bv3" style="font-size:6.69px;line-height:6.69px;color:#666;left:676.88px;top:606.50px;transform-origin:0 0;transform:scaleX(0.8426);">$25.92B</div>
<div class="t" id="bl0" style="font-size:6.40px;line-height:6.40px;color:#555;right:309.40px;top:509.30px;transform-origin:100% 0;transform:scaleX(1.0009);">Generics</div>
<div class="t" id="bl3" style="font-size:6.69px;line-height:6.69px;color:#555;right:309.20px;top:606.00px;transform-origin:100% 0;transform:scaleX(0.8986);">Medical and Surgical</div>
<div class="t" id="ba0" style="font-size:6.69px;line-height:6.69px;color:#555;left:495.00px;top:631.20px;transform-origin:50% 0;transform:translateX(-50%) scaleX(0.8254);">$0.00B</div>
<div class="t" id="ba1" style="font-size:6.69px;line-height:6.69px;color:#555;left:562.20px;top:631.20px;transform-origin:50% 0;transform:translateX(-50%) scaleX(0.8226);">$10.00B</div>
<div class="t" id="ba2" style="font-size:6.69px;line-height:6.69px;color:#555;left:629.40px;top:631.20px;transform-origin:50% 0;transform:translateX(-50%) scaleX(0.8226);">$20.00B</div>
<div class="t" id="ba3" style="font-size:6.69px;line-height:6.69px;color:#555;left:696.60px;top:631.20px;transform-origin:50% 0;transform:translateX(-50%) scaleX(0.8226);">$30.00B</div>
<div class="t" id="ba4" style="font-size:6.69px;line-height:6.69px;color:#555;left:763.80px;top:631.20px;transform-origin:50% 0;transform:translateX(-50%) scaleX(0.8226);">$40.00B</div>
<div class="t" id="tt1" style="font-size:9.30px;line-height:9.30px;color:#666;left:435.50px;top:549.30px;transform-origin:0 0;transform:scaleX(0.9125);">Pharma Distribution</div>
<div class="t" id="tt2" style="font-size:7.85px;line-height:7.85px;color:#666;left:444.50px;top:567.80px;transform-origin:0 0;transform:scaleX(0.8622);">sales (SUM) (Sum)</div>
<div class="t" id="tt3" style="font-size:8.72px;line-height:8.72px;color:#333;font-weight:bold;left:508.80px;top:567.20px;transform-origin:0 0;transform:scaleX(0.8190);">$30.79B</div>
<div class="t" id="pwb" style="font-size:9.01px;line-height:9.01px;color:#222;left:697.00px;top:652.40px;transform-origin:0 0;transform:scaleX(0.9407);">Powered by QuickSight</div>
</body></html>
